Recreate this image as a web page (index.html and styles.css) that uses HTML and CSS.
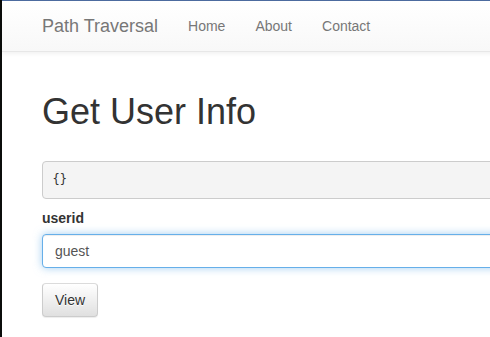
FILE: index.html
```html
<!DOCTYPE html>
<html lang="en">
<head>
    <meta charset="UTF-8">
    <meta name="viewport" content="width=device-width, initial-scale=1.0">
    <title>Path Traversal</title>
    <link rel="stylesheet" href="styles.css">
</head>
<body>
    <div class="page">
        <nav class="navbar">
            <div class="navbar-inner">
                <a class="navbar-brand" href="#">Path Traversal</a>
                <ul class="nav">
                    <li><a href="#">Home</a></li>
                    <li><a href="#">About</a></li>
                    <li><a href="#">Contact</a></li>
                </ul>
            </div>
        </nav>

        <div class="container">
            <h1>Get User Info</h1>
            <pre class="result">{}</pre>
            <form class="user-form">
                <div class="form-group">
                    <label for="userid">userid</label>
                    <input type="text" id="userid" class="form-control is-focused" value="guest">
                </div>
                <button type="button" class="btn">View</button>
            </form>
        </div>
    </div>
</body>
</html>
```

FILE: styles.css
```css
html {
    overflow: hidden;
}
body {
    margin: 0;
    background: #0b0d0b;
    font-family: "Liberation Sans", Arial, sans-serif;
    font-size: 14px;
    line-height: 1.42857;
    color: #333;
}
.page {
    margin-left: 2px;
    width: 760px;
    min-height: 337px;
    background: #fff;
    border-top: 1px solid #4e6ea3;
}
.navbar {
    height: 50px;
    border-bottom: 1px solid #e7e7e7;
    background: linear-gradient(to bottom, #fff 0, #f8f8f8 100%);
    box-shadow: inset 0 1px 0 rgba(255,255,255,.15), 0 1px 5px rgba(0,0,0,.075);
}
.navbar-inner {
    display: flex;
    padding-left: 25px;
}
.navbar-brand {
    padding: 15px;
    font-size: 18px;
    line-height: 20px;
    color: #777;
    text-decoration: none;
    text-shadow: 0 1px 0 rgba(255,255,255,.25);
}
.nav {
    display: flex;
    margin: 0;
    padding: 0;
    list-style: none;
}
.nav a {
    display: block;
    padding: 15px;
    line-height: 20px;
    color: #777;
    text-decoration: none;
}
.container {
    padding: 20px 0 0 40px;
}
h1 {
    margin: 20px 0 29px;
    font-size: 36px;
    font-weight: 500;
    line-height: 1.1;
}
.result {
    margin: 0 0 10px;
    padding: 9.5px;
    font-family: "DejaVu Sans Mono", "Liberation Mono", monospace;
    font-size: 12px;
    line-height: 1.42857;
    color: #333;
    background: #f4f4f4;
    border: 1px solid #ccc;
    border-radius: 4px;
}
.form-group {
    margin-bottom: 15px;
}
.form-group label {
    display: inline-block;
    margin-bottom: 5px;
    font-weight: bold;
}
.form-control {
    display: block;
    box-sizing: border-box;
    width: 100%;
    height: 34px;
    padding: 6px 12px;
    font-family: inherit;
    font-size: 14px;
    color: #555;
    background: #fff;
    border: 1px solid #ccc;
    border-radius: 4px;
    outline: none;
}
.form-control.is-focused {
    border-color: #66afe9;
    box-shadow: inset 0 1px 1px rgba(0,0,0,.075), 0 0 8px rgba(102,175,233,.6);
}
.btn {
    height: 34px;
    padding: 6px 12px;
    font-family: inherit;
    font-size: 14px;
    line-height: 20px;
    color: #333;
    background: linear-gradient(to bottom, #fff 0, #e0e0e0 100%);
    border: 1px solid #ccc;
    border-color: #dbdbdb #ccc #ccc;
    border-radius: 4px;
    text-shadow: 0 1px 0 #fff;
    box-shadow: inset 0 1px 0 rgba(255,255,255,.15), 0 1px 1px rgba(0,0,0,.075);
    cursor: pointer;
}
```
